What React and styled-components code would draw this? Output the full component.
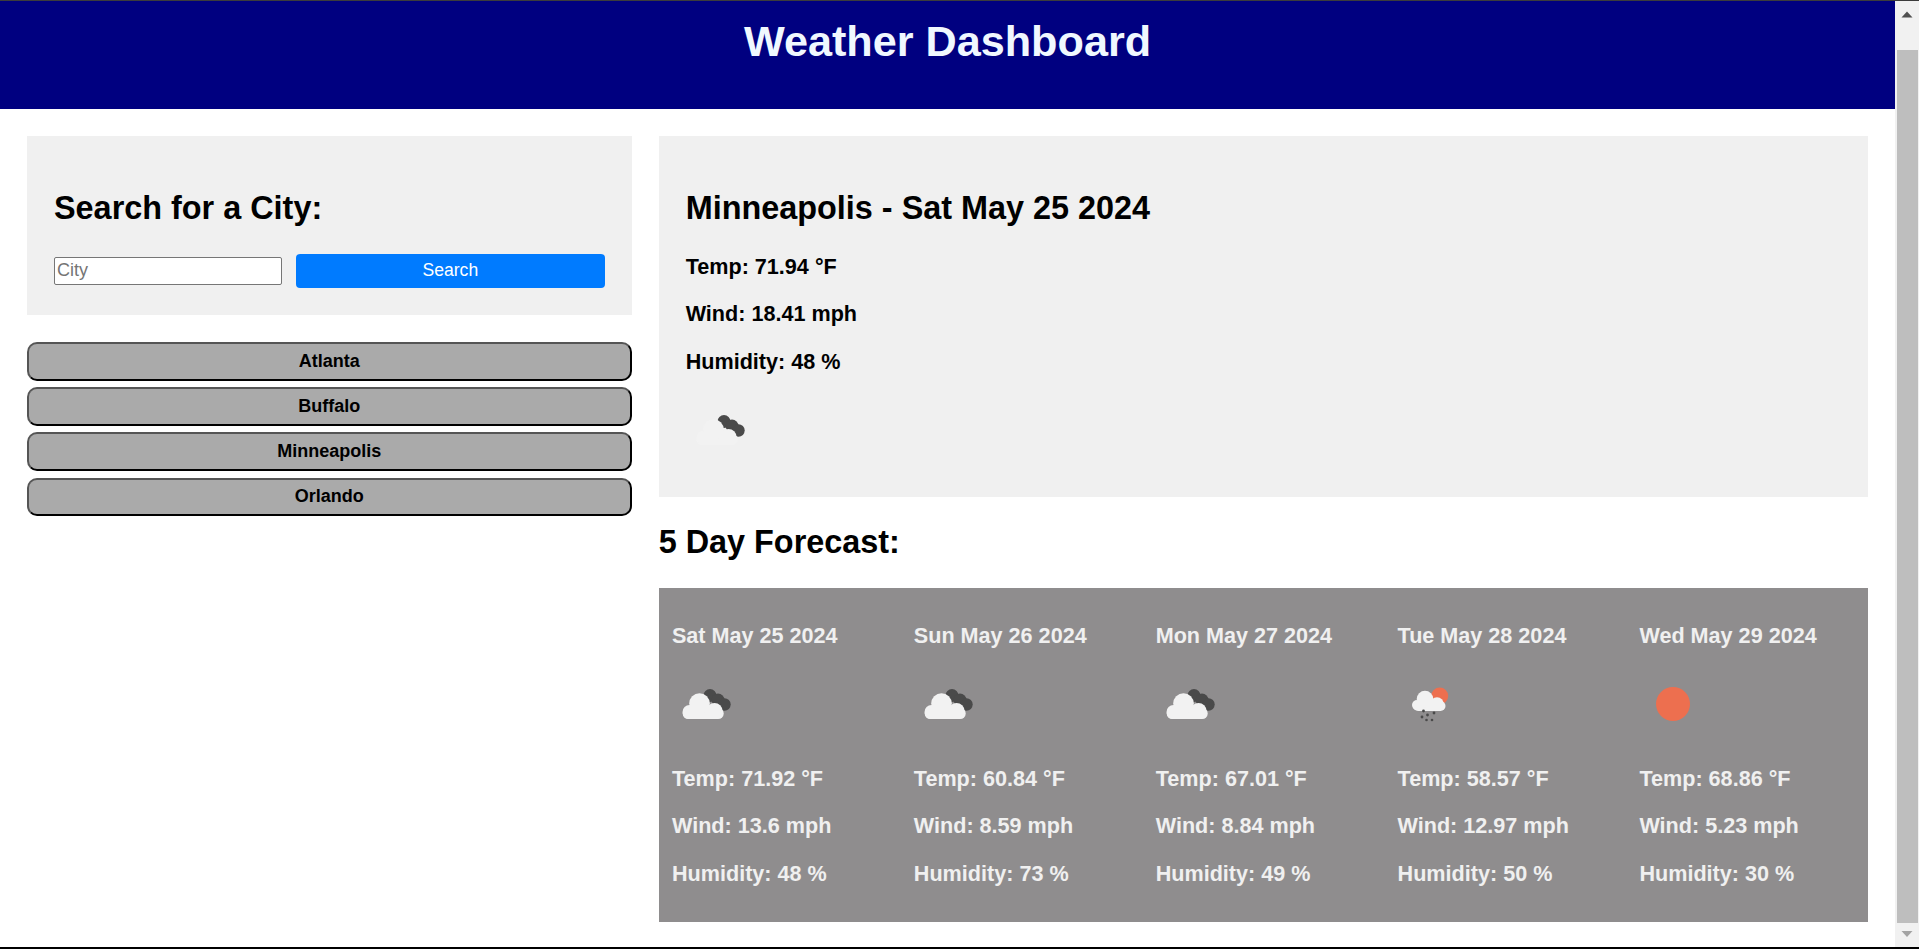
import React from "react";
import styled, { createGlobalStyle } from "styled-components";

const CURRENT = {
  city: "Minneapolis",
  date: "Sat May 25 2024",
  temp: "71.94",
  wind: "18.41",
  humidity: "48",
};

const FORECAST = [
  { date: "Sat May 25 2024", icon: "clouds", temp: "71.92", wind: "13.6", humidity: "48" },
  { date: "Sun May 26 2024", icon: "clouds", temp: "60.84", wind: "8.59", humidity: "73" },
  { date: "Mon May 27 2024", icon: "clouds", temp: "67.01", wind: "8.84", humidity: "49" },
  { date: "Tue May 28 2024", icon: "rain", temp: "58.57", wind: "12.97", humidity: "50" },
  { date: "Wed May 29 2024", icon: "sun", temp: "68.86", wind: "5.23", humidity: "30" },
];

const CITIES = ["Atlanta", "Buffalo", "Minneapolis", "Orlando"];

const GlobalStyle = createGlobalStyle`
  html, body {
    margin: 0;
    height: 100%;
    overflow: hidden;
    background: #fff;
  }
  body {
    font-family: "Liberation Sans", Arial, sans-serif;
    color: #000;
  }
`;

const Frame = styled.div`
  display: flex;
  height: 949px;
  box-sizing: border-box;
  border-top: 1px solid #3c3c3c;
  border-bottom: 2px solid #000;
`;
const Page = styled.div`
  flex: 1;
  min-width: 0;
`;
const Header = styled.header`
  height: 108px;
  background: #000080;
  color: #f0f8ff;
  text-align: center;
`;
const Title = styled.h1`
  margin: 0;
  padding-top: 17px;
  font-size: 43.2px;
  line-height: 46px;
  font-weight: 700;
`;
const Layout = styled.main`
  display: grid;
  grid-template-columns: 1fr 2fr;
  gap: 27px;
  padding: 27px;
`;
const Column = styled.div`
  display: flex;
  flex-direction: column;
  min-width: 0;
`;
const SearchPanel = styled.section`
  background: #f0f0f0;
  padding: 54px 27px 27px;
  height: 179px;
  box-sizing: border-box;
`;
const Heading = styled.h2`
  margin: 0;
  font-size: 32.4px;
  line-height: 37px;
  font-weight: 700;
`;
const SearchRow = styled.form`
  display: flex;
  align-items: center;
  gap: 14px;
  margin-top: 27px;
`;
const CityInput = styled.input`
  width: 228px;
  height: 28px;
  box-sizing: border-box;
  padding: 0 2px 2px;
  border: 1px solid #767676;
  border-radius: 2px;
  background: #fff;
  font: 18px "Liberation Sans", Arial, sans-serif;

  &::placeholder {
    color: #757575;
  }
`;
const SearchButton = styled.button`
  flex: 1;
  height: 34px;
  padding: 0 6px 2px;
  border: none;
  border-radius: 4px;
  background: #007bff;
  color: #fff;
  font: 17.6px "Liberation Sans", Arial, sans-serif;
`;
const CityList = styled.div`
  display: flex;
  flex-direction: column;
  gap: 6.7px;
  margin-top: 27px;
`;
const CityButton = styled.button`
  height: 38.5px;
  border: 2px outset #000;
  border-color: #555 #000 #000 #555;
  border-radius: 10px;
  background: #aaa;
  color: #000;
  font: 700 18px "Liberation Sans", Arial, sans-serif;
`;
const Stat = styled.p`
  margin: 22.3px 0 0;
  font-size: 21.6px;
  line-height: 25px;
  font-weight: 700;
`;
const CurrentPanel = styled.section`
  height: 361px;
  box-sizing: border-box;
  padding: 54px 27px 0;
  background: #f0f0f0;

  ${Stat}:first-of-type {
    margin-top: 27px;
  }
`;
const ForecastHeading = styled(Heading)`
  margin: 27px 0 27px;
`;
const ForecastPanel = styled.section`
  display: grid;
  grid-template-columns: repeat(5, 1fr);
  height: 334px;
  background: #8f8d8e;
  color: #f0f0f0;
`;
const Day = styled.article`
  padding: 35px 0 0 13.3px;

  ${Stat}:first-of-type {
    margin-top: 29px;
  }
`;
const DayDate = styled.h3`
  margin: 0 0 23px;
  font-size: 21.6px;
  line-height: 25px;
  font-weight: 700;
`;
const IconSvg = styled.svg`
  display: block;
  width: 66px;
  height: 66px;
  margin-top: ${(p) => p.$top || 0}px;
  filter: blur(0.4px);
`;
const Scrollbar = styled.aside`
  display: flex;
  flex-direction: column;
  width: 24px;
  background: #f1f1f1;
`;
const ScrollArrow = styled.svg`
  display: block;
  flex: none;
  width: 24px;
  height: 24px;
`;
const ScrollTrack = styled.div`
  flex: 1;
  display: flex;
  flex-direction: column;
  justify-content: flex-end;
  padding-left: 2px;
  padding-right: 1px;
`;
const ScrollThumb = styled.div`
  height: 873px;
  background: #bebebe;
`;

const WeatherIcon = ({ kind, top }) => (
  <IconSvg viewBox="0 0 66 66" $top={top}>
    {kind === "sun" && <circle cx="34" cy="33" r="17" fill="#ed6f4f" />}
    {kind === "clouds" && (
      <g fill="#4a4a4a">
        <circle cx="38" cy="24.5" r="6.5" />
        <circle cx="46" cy="29" r="6.5" />
        <circle cx="52.5" cy="33.5" r="6.2" />
      </g>
    )}
    {kind === "clouds" && (
      <g fill="#f2f2f2">
        <rect x="10.7" y="37" width="41" height="11" rx="5.5" />
        <circle cx="27.5" cy="32.5" r="10.3" />
        <circle cx="17.5" cy="41" r="7" />
        <circle cx="42.5" cy="40" r="8" />
      </g>
    )}
    {kind === "rain" && (
      <>
        <circle cx="41.7" cy="25" r="8.5" fill="#ed6f4f" />
        <g fill="#f2f2f2">
          <rect x="15" y="30" width="32.5" height="10" rx="5" />
          <circle cx="27" cy="28" r="8.3" />
          <circle cx="19" cy="34" r="5" />
          <circle cx="39" cy="33" r="6.8" />
        </g>
        <g fill="#4a4a4a">
          <circle cx="25.5" cy="40" r="1.4" />
          <circle cx="29.5" cy="44" r="1.4" />
          <circle cx="36" cy="42" r="1.4" />
          <circle cx="24" cy="46" r="1.4" />
          <circle cx="28.5" cy="49" r="1.3" />
          <circle cx="34" cy="49" r="1.3" />
        </g>
      </>
    )}
  </IconSvg>
);

const App = () => (
  <Frame>
    <GlobalStyle />
    <Page>
      <Header>
        <Title>Weather Dashboard</Title>
      </Header>
      <Layout>
        <Column>
          <SearchPanel>
            <Heading>Search for a City:</Heading>
            <SearchRow onSubmit={(e) => e.preventDefault()}>
              <CityInput placeholder="City" />
              <SearchButton>Search</SearchButton>
            </SearchRow>
          </SearchPanel>
          <CityList>
            {CITIES.map((city) => (
              <CityButton key={city}>{city}</CityButton>
            ))}
          </CityList>
        </Column>
        <Column>
          <CurrentPanel>
            <Heading>
              {CURRENT.city} - {CURRENT.date}
            </Heading>
            <Stat>Temp: {CURRENT.temp} °F</Stat>
            <Stat>Wind: {CURRENT.wind} mph</Stat>
            <Stat>Humidity: {CURRENT.humidity} %</Stat>
            <WeatherIcon kind="clouds" top={23} />
          </CurrentPanel>
          <ForecastHeading>5 Day Forecast:</ForecastHeading>
          <ForecastPanel>
            {FORECAST.map((day) => (
              <Day key={day.date}>
                <DayDate>{day.date}</DayDate>
                <WeatherIcon kind={day.icon} />
                <Stat>Temp: {day.temp} °F</Stat>
                <Stat>Wind: {day.wind} mph</Stat>
                <Stat>Humidity: {day.humidity} %</Stat>
              </Day>
            ))}
          </ForecastPanel>
        </Column>
      </Layout>
    </Page>
    <Scrollbar>
      <ScrollArrow viewBox="0 0 24 24">
        <path d="M12 10.5 L17.5 16.5 H6.5 Z" fill="#505050" />
      </ScrollArrow>
      <ScrollTrack>
        <ScrollThumb />
      </ScrollTrack>
      <ScrollArrow viewBox="0 0 24 24">
        <path d="M6.5 8 H17.5 L12 14 Z" fill="#a3a3a3" />
      </ScrollArrow>
    </Scrollbar>
  </Frame>
);

export default App;
